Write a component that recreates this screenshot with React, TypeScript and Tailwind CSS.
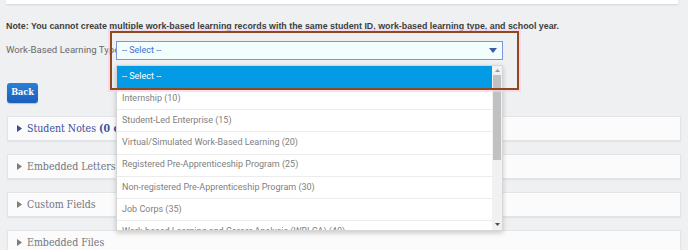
const options = [
  "Internship (10)",
  "Student-Led Enterprise (15)",
  "Virtual/Simulated Work-Based Learning (20)",
  "Registered Pre-Apprenticeship Program (25)",
  "Non-registered Pre-Apprenticeship Program (30)",
  "Job Corps (35)",
  "Work-based Learning and Career Analysis (WBLCA) (40)",
];

const panels = [
  { title: "Student Notes", extra: "(0 of 0)", active: true },
  { title: "Embedded Letters", active: false },
  { title: "Custom Fields", active: false },
  { title: "Embedded Files", active: false },
];

function Caret({ className }: { className: string }) {
  return (
    <svg width="5" height="7" viewBox="0 0 5 7" className={className}>
      <path d="M0 0 L5 3.5 L0 7 Z" fill="currentColor" />
    </svg>
  );
}

export default function App() {
  return (
    <div className="relative w-[688px] h-[250px] overflow-hidden bg-[#eef0f2] font-['Roboto','Liberation_Sans',sans-serif]">
      {/* top card edge */}
      <div className="mx-[6px] mr-[10px] h-[4px] bg-white shadow-[0_1px_2px_rgba(0,0,0,0.12)]" />

      <p className="mt-[16px] px-[6px] text-[8.85px] leading-[12px] font-bold text-[#3d3d3d] font-['Liberation_Sans',sans-serif] whitespace-nowrap">
        Note: You cannot create multiple work-based learning records with the same student ID, work-based learning type, and school year.
      </p>

      <div className="mt-[9px] flex items-center px-[6px]">
        <label className="w-[110px] whitespace-nowrap text-[9.6px] text-[#6a6a6a]">Work-Based Learning Type</label>
        <div className="relative">
          <div className="flex h-[19px] w-[387px] items-center justify-between border border-[#7b97dc] bg-[#f2fdfd] pl-[5px] pr-[5px]">
            <span className="text-[9px] text-[#3c73d0]">-- Select --</span>
            <svg width="8" height="5" viewBox="0 0 8 5" className="text-[#3b5aa8]">
              <path d="M0 0 H8 L4 5 Z" fill="currentColor" />
            </svg>
          </div>

          {/* open list */}
          <div className="absolute left-0 top-[24px] z-20 flex h-[166px] w-[387px] border border-[#d6d6d6] bg-white shadow-[0_2px_5px_rgba(0,0,0,0.2)]">
            <div className="flex-1 overflow-hidden">
              <div className="flex h-[22px] items-center bg-[#039be5] pl-[5px] text-[9px] text-white">
                -- Select --
              </div>
              {options.map((o) => (
                <div
                  key={o}
                  className="flex h-[22.2px] shrink-0 items-center border-b border-[#ececec] pl-[5px] text-[9px] text-[#808080]"
                >
                  {o}
                </div>
              ))}
            </div>
            <div className="flex w-[10px] flex-col items-center bg-[#f1f1f1]">
              <svg width="5" height="3" viewBox="0 0 5 3" className="mt-[3px] text-[#9a9a9a]">
                <path d="M0 3 H5 L2.5 0 Z" fill="currentColor" />
              </svg>
              <div className="mt-[3px] h-[85px] w-[8px] bg-[#c1c1c1]" />
              <div className="flex-1" />
              <svg width="5" height="3" viewBox="0 0 5 3" className="mb-[4px] text-[#505050]">
                <path d="M0 0 H5 L2.5 3 Z" fill="currentColor" />
              </svg>
            </div>
          </div>
        </div>
      </div>

      <div className="px-[7px]">
        <button className="mt-[23px] h-[20px] w-[31px] rounded-[3px] bg-gradient-to-b from-[#2b7fd6] to-[#1a5fbd] text-[9px] font-bold text-white font-['DejaVu_Serif_Condensed','DejaVu_Serif',serif] shadow-[0_1px_1px_rgba(0,0,0,0.2)]">
          Back
        </button>

        <div className="mt-[13px] flex flex-col gap-[13px]">
          {panels.map((p) => (
            <div
              key={p.title}
              className="flex h-[25px] shrink-0 items-center gap-[5px] border border-[#e2e4e7] bg-[#fbfbfc] pl-[9px] shadow-[0_1px_1px_rgba(0,0,0,0.05)]"
            >
              <Caret className={p.active ? "text-[#3c4a92]" : "text-[#7c7c7c]"} />
              <span
                className={`whitespace-nowrap text-[10.5px] font-['DejaVu_Serif_Condensed','DejaVu_Serif',serif] ${
                  p.active ? "text-[#3c4ea0]" : "text-[#72767b]"
                }`}
              >
                {p.title}
                {p.extra && <b className="ml-[3px]">{p.extra}</b>}
              </span>
            </div>
          ))}
        </div>
      </div>

      {/* highlight box */}
      <div className="pointer-events-none absolute left-[110px] top-[31px] z-30 h-[59px] w-[409px] border-2 border-[#8b4a1f] shadow-[0_0_0_2px_rgba(252,205,230,0.7)]" />
    </div>
  );
}
